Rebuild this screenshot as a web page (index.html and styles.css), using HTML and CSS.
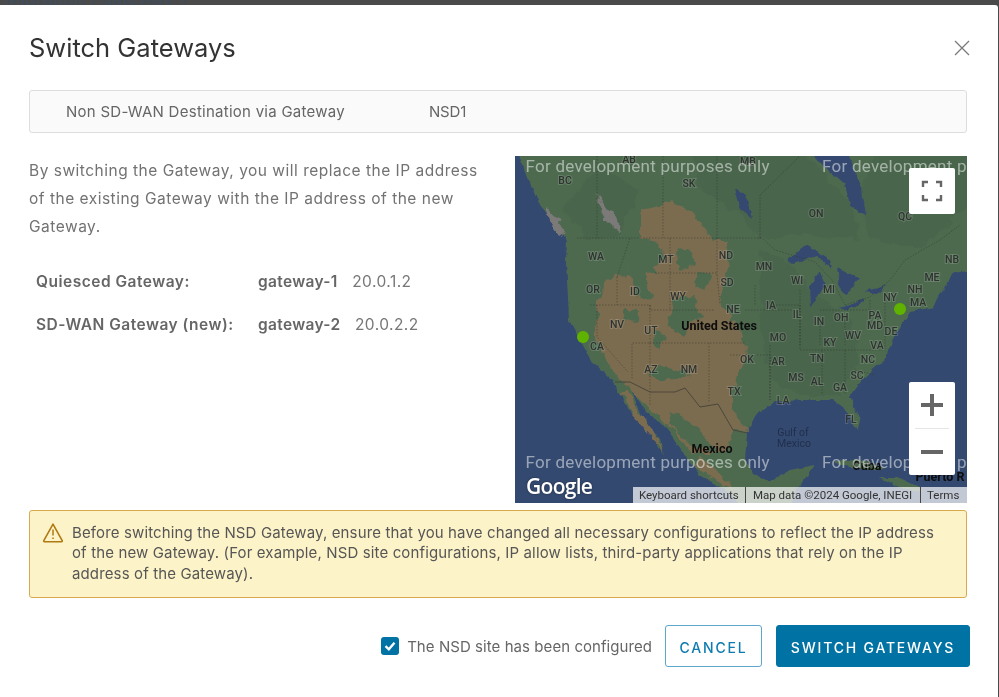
FILE: index.html
```html
<!DOCTYPE html>
<html lang="en">
<head>
<meta charset="utf-8">
<title>Switch Gateways</title>
<link rel="stylesheet" href="styles.css">
</head>
<body>
<div class="backdrop"><span class="crumb">Migration / gateway 1</span></div>
<main class="modal">
  <header class="modal-head">
    <h1 class="title">Switch Gateways</h1>
    <button class="close" aria-label="Close">
      <svg viewBox="0 0 16 16" width="16" height="16"><path d="M1 1 15 15M15 1 1 15" class="close-x"/></svg>
    </button>
  </header>
  <section class="info">
    <span class="info-label">Non SD-WAN Destination via Gateway</span>
    <span class="info-value">NSD1</span>
  </section>
  <section class="columns">
    <div class="left">
      <p class="intro">By switching the Gateway, you will replace the IP address<br>of the existing Gateway with the IP address of the new<br>Gateway.</p>
      <div class="gw-list">
        <div class="gw-row"><b class="gw-label">Quiesced Gateway:</b><b class="gw-name">gateway-1</b><span class="ip">20.0.1.2</span></div>
        <div class="gw-row"><b class="gw-label">SD-WAN Gateway (new):</b><b class="gw-name">gateway-2</b><span class="ip">20.0.2.2</span></div>
      </div>
    </div>
    <div class="map">
      <svg class="map-art" viewBox="515 156 452 347" width="452" height="347">
        <defs>
          <filter id="rough" x="-5%" y="-5%" width="110%" height="110%">
            <feTurbulence type="fractalNoise" baseFrequency=".09" numOctaves="3" seed="4" result="n"/>
            <feDisplacementMap in="SourceGraphic" in2="n" scale="11" xChannelSelector="R" yChannelSelector="G"/>
            <feGaussianBlur stdDeviation=".6"/>
          </filter>
          <filter id="rough-fine" x="-5%" y="-5%" width="110%" height="110%">
            <feTurbulence type="fractalNoise" baseFrequency=".14" numOctaves="2" seed="9" result="n"/>
            <feDisplacementMap in="SourceGraphic" in2="n" scale="5" xChannelSelector="R" yChannelSelector="G"/>
            <feGaussianBlur stdDeviation=".4"/>
          </filter>
        </defs>
        <rect x="515" y="156" width="452" height="347" class="ocean"/>
        <g filter="url(#rough-fine)">
        <path class="land" d="M510,150 519,156 528,180 540,205 556,225 567,240 566,262 568,297 569,320 580,340 593,363 612,381 628,408 650,430 663,455 660,440 640,415 632,390 645,410 668,430 685,455 700,475 725,490 745,510 790,510 798,488 815,465 790,470 770,482 755,475 745,460 747,432 755,415 775,402 800,400 833,400 843,407 858,430 860,420 850,397 862,380 887,357 888,350 897,333 910,312 933,307 945,287 953,273 975,270 975,150Z"/>
        <path class="land" d="M830,461 860,460 885,468 870,470 845,466Z"/>
        <path class="land" d="M880,478 900,478 925,490 905,490Z"/>
        </g>
        <g filter="url(#rough)">
        <path class="land-dark" d="M690,150 800,150 850,200 860,240 800,235 760,238 740,215 700,190Z"/>
        <path class="land-dark" d="M880,150 975,150 975,200 920,250 870,240 860,190Z"/>
        <path class="land-dark" d="M760,250 790,262 810,290 850,320 860,360 840,395 800,395 770,380 760,330Z"/>
        <path class="land-dark" d="M600,165 640,190 620,235 590,238 560,210Z"/>
        <path class="brown" d="M640,210 670,200 693,213 713,240 730,240 727,273 720,300 740,333 747,353 733,387 733,413 747,432 733,430 727,453 693,453 673,430 657,417 640,400 613,373 597,337 597,300 617,277 657,273 640,240Z"/>
        <path class="brown" d="M628,392 650,425 663,452 640,424 620,392Z"/>
        <path class="brown" d="M700,455 720,475 735,490 716,482 695,465Z"/>
        <path class="brown" d="M605,278 625,285 625,300 600,300Z"/>
        <path class="green" d="M640,238 658,244 666,258 652,268 645,282 654,296 640,300 632,280 625,268 628,250Z"/>
        <path class="green" d="M676,250 690,252 694,264 680,270Z"/>
        <path class="green" d="M672,300 695,296 700,318 690,322 682,336 668,325Z"/>
        <path class="green" d="M655,330 665,336 660,350 650,344Z"/>
        <path class="green" d="M660,365 690,372 685,380 650,378Z"/>
        <path class="green" d="M672,410 700,430 715,452 690,445 670,425Z"/>
        <path class="green" d="M625,308 640,312 636,322 622,320Z"/>
        <path class="green" d="M698,270 712,276 706,290 694,286Z"/>
        <path class="grey" d="M545,205 556,218 566,232 560,236 548,220Z"/>
        <path class="grey" d="M597,195 612,212 622,232 606,220Z"/>
        </g>
        <g filter="url(#rough-fine)">
        <path class="lake" d="M808,150 847,150 862,190 866,215 860,212 850,205 845,185 830,172Z"/>
        <path class="lake" d="M735,188 745,195 752,218 740,208Z"/>
        <path class="lake" d="M787,260 807,245 830,260 832,270 817,256 793,264Z"/>
        <path class="lake" d="M810,307 809,287 820,272 825,285 816,300Z"/>
        <path class="lake" d="M836,268 860,278 846,295 840,290Z"/>
        <path class="lake" d="M840,308 865,298 860,305 845,310Z"/>
        <path class="lake" d="M865,292 887,285 877,294Z"/>
        </g>
        <path class="line" d="M577,238H762L775,250 815,262 832,280 845,305 870,297 890,280 905,260 940,240 960,225M597,156V238M663,156V238M717,156V238M760,238V195L800,156M590,305H650V310H670M597,305V337L628,372M617,277V305M617,277 630,238M650,305V343H632V380M655,273H717M670,238V310M670,310H715M717,238V275M717,275 720,305M650,343H745M650,343V405M709,343V403M730,355H770V400M770,345V400M770,305H800V345M745,310H800M755,285V305M800,290V350M800,350H885M820,320V345M845,320V345M820,310H870M885,300V350M870,300V325M845,350V395M822,350V395M855,370 875,375"/>
        <path class="border" d="M615,382H630L650,392H675L685,388 700,407 718,404 733,430 747,433"/>
        <text class="lbl" x="565" y="180">BC</text><text class="lbl" x="689" y="183">SK</text><text class="lbl" x="629" y="159">AB</text><text class="lbl" x="748" y="161">MB</text><text class="lbl" x="816" y="213">ON</text><text class="lbl" x="905" y="216">QC</text>
        <text class="lbl" x="596" y="256">WA</text><text class="lbl" x="666" y="259">MT</text><text class="lbl" x="726" y="255">ND</text><text class="lbl" x="764" y="266">MN</text><text class="lbl" x="952" y="259">NB</text><text class="lbl" x="932" y="277">ME</text><text class="lbl" x="797" y="280">WI</text><text class="lbl" x="829" y="289">MI</text><text class="lbl" x="593" y="289">OR</text><text class="lbl" x="635" y="291">ID</text><text class="lbl" x="678" y="296">WY</text><text class="lbl" x="727" y="282">SD</text><text class="lbl" x="915" y="289">NH</text><text class="lbl" x="890" y="297">NY</text><text class="lbl" x="918" y="302">MA</text><text class="lbl" x="733" y="309">NE</text><text class="lbl" x="771" y="305">IA</text><text class="lbl" x="797" y="314">IL</text><text class="lbl" x="819" y="321">IN</text><text class="lbl" x="841" y="317">OH</text><text class="lbl" x="875" y="315">PA</text><text class="lbl" x="875" y="325">MD</text><text class="lbl" x="891" y="331">DE</text><text class="lbl" x="617" y="324">NV</text><text class="lbl" x="651" y="330">UT</text><text class="lbl" x="597" y="346">CA</text><text class="lbl" x="778" y="337">MO</text><text class="lbl" x="830" y="342">KY</text><text class="lbl" x="853" y="335">WV</text><text class="lbl" x="877" y="345">VA</text><text class="lbl" x="868" y="359">NC</text><text class="lbl" x="747" y="359">OK</text><text class="lbl" x="778" y="361">AR</text><text class="lbl" x="817" y="358">TN</text><text class="lbl" x="651" y="369">AZ</text><text class="lbl" x="689" y="369">NM</text><text class="lbl" x="796" y="377">MS</text><text class="lbl" x="817" y="381">AL</text><text class="lbl" x="840" y="387">GA</text><text class="lbl" x="857" y="375">SC</text><text class="lbl" x="734" y="391">TX</text><text class="lbl" x="783" y="400">LA</text><text class="lbl" x="851" y="419">FL</text>
        <text class="country" x="719" y="325">United States</text><text class="country" x="712" y="448">Mexico</text><text class="country" x="867" y="465">Cuba</text><text class="country" x="940" y="476">Puerto R</text>
        <text class="gulf" x="793" y="432">Gulf of</text><text class="gulf" x="794" y="443">Mexico</text>
        <circle class="dot" cx="583" cy="337" r="6"/><circle class="dot" cx="900" cy="309" r="6"/>
        <text class="dev" x="525.5" y="172">For development purposes only</text><text class="dev" x="822" y="172">For development purposes only</text>
        <text class="dev" x="525.5" y="468">For development purposes only</text><text class="dev" x="822" y="468">For development purposes only</text>
      </svg>
      <button class="ctl ctl-full" aria-label="Fullscreen">
        <svg viewBox="0 0 22 22" width="22" height="22"><path class="ctl-ic-thin" d="M2 7V2H7M15 2H20V7M20 15V20H15M7 20H2V15"/></svg>
      </button>
      <div class="ctl ctl-zoom">
        <button class="zoom-btn" aria-label="Zoom in"><svg viewBox="0 0 22 22" width="22" height="22"><path class="ctl-ic" d="M0 11H22M11 0V22"/></svg></button>
        <span class="zoom-sep"></span>
        <button class="zoom-btn" aria-label="Zoom out"><svg viewBox="0 0 22 22" width="22" height="22"><path class="ctl-ic" d="M0 11H22"/></svg></button>
      </div>
      <span class="logo">Google</span>
      <div class="attrib"><span class="a-key">Keyboard shortcuts</span><span class="a-data">Map data ©2024 Google, INEGI</span><span class="a-terms">Terms</span></div>
    </div>
  </section>
  <section class="alert">
    <svg class="alert-ic" viewBox="0 0 20 20" width="20" height="20"><path class="alert-tri" d="M10 1.2 19.2 17.6a.8.8 0 0 1-.7 1.2H1.5a.8.8 0 0 1-.7-1.2Z"/><path class="alert-mark" d="M10 6.5V12.5M10 14.6V16"/></svg>
    <p class="alert-text">Before switching the NSD Gateway, ensure that you have changed all necessary configurations to reflect the IP address<br>of the new Gateway. (For example, NSD site configurations, IP allow lists, third-party applications that rely on the IP<br>address of the Gateway).</p>
  </section>
  <footer class="foot">
    <label class="check"><span class="box"><svg viewBox="0 0 18 18" width="18" height="18"><path d="M4.5 9.2 7.8 12.3 13.5 5.8" class="tick"/></svg></span>The NSD site has been configured</label>
    <button class="btn btn-out">CANCEL</button>
    <button class="btn btn-solid">SWITCH GATEWAYS</button>
  </footer>
</main>
</body>
</html>
```
FILE: styles.css
```css
* { box-sizing: border-box; }
html, body { margin: 0; height: 100%; }
body {
  background: #4a4a4a;
  font-family: "Inter", "Liberation Sans", sans-serif;
  color: #666;
  overflow: hidden;
  display: flex;
  flex-direction: column;
}
.backdrop { height: 5px; overflow: hidden; flex: none; padding-left: 5px; }
.crumb { display: block; margin-top: -10px; font-size: 18px; line-height: 18px; color: #3f4d5c; }
.modal {
  flex: 1;
  width: 998px;
  background: #fff;
  border-top-right-radius: 3px;
  padding: 0 31px 0 29px;
  display: flex;
  flex-direction: column;
  filter: blur(0.35px);
}
.modal-head { height: 85px; display: flex; align-items: center; justify-content: space-between; }
.title { margin: 0; font-size: 25.5px; font-weight: 400; color: #333; line-height: 86px; }
.close { border: 0; background: none; padding: 0; margin-right: -3px; height: 16px; }
.close-x { stroke: #7a7a7a; stroke-width: 1.3; fill: none; }
.info {
  height: 43px;
  border: 1px solid #ddd;
  border-radius: 3px;
  background: #fafafa;
  display: flex;
  align-items: center;
  padding: 0 0 1px 36px;
  font-size: 15px;
  letter-spacing: .26px;
  color: #666;
}
.info-label { width: 363px; }
.info-value { letter-spacing: -.2px; }
.columns { margin-top: 23px; display: flex; justify-content: space-between; height: 347px; }
.left { width: 470px; }
.intro { margin: 1px 0 0; font-size: 15.5px; letter-spacing: .5px; line-height: 28px; color: #727272; }
.gw-list { margin-top: 19px; padding-left: 7px; font-size: 15.5px; color: #666; }
.gw-row { display: flex; height: 43px; align-items: center; }
.gw-row b { font-weight: 600; }
.gw-label { width: 222px; letter-spacing: .5px; }
.gw-name { letter-spacing: .33px; }
.ip { margin-left: 14.5px; color: #777; letter-spacing: .45px; }
.map { position: relative; width: 452px; height: 347px; overflow: hidden; }
.map-art { display: block; }
.ocean { fill: #34496f; }
.land { fill: #4e6b50; }
.land-dark { fill: #4a654c; }
.brown { fill: #7b6c50; }
.green { fill: #4e6b50; }
.grey { fill: #7c7a78; }
.lake { fill: #34496f; }
.line { fill: none; stroke: #2b3029; stroke-width: .8; stroke-dasharray: 1.5 1.5; opacity: .55; }
.border { fill: none; stroke: #4b463c; stroke-width: 1; }
.lbl { font: 500 10.5px "Roboto", sans-serif; fill: #2f3330; text-anchor: middle; dominant-baseline: central; paint-order: stroke; stroke: rgba(255,255,255,.14); stroke-width: 2px; }
.country { font: 700 12.5px "Roboto", sans-serif; fill: #0d0d0d; text-anchor: middle; dominant-baseline: central; }
.gulf { font: 400 10.5px "Roboto", sans-serif; fill: #1f2f4d; text-anchor: middle; dominant-baseline: central; }
.dev { font: 400 17px "Roboto", sans-serif; fill: rgba(255,255,255,.5); letter-spacing: .25px; }
.dot { fill: #5fb300; }
.ctl { position: absolute; left: 394px; width: 46px; background: #fff; border: 0; border-radius: 2px; padding: 0; }
.ctl-full { top: 12px; height: 46px; display: flex; align-items: center; justify-content: center; }
.ctl-zoom { top: 226px; height: 93px; display: flex; flex-direction: column; align-items: center; }
.zoom-btn { border: 0; background: none; padding: 0; height: 46px; width: 46px; display: flex; align-items: center; justify-content: center; }
.zoom-sep { width: 34px; height: 1px; background: #e6e6e6; flex: none; }
.ctl-ic { stroke: #666; stroke-width: 4; fill: none; }
.ctl-ic-thin { stroke: #666; stroke-width: 2.4; fill: none; }
.logo { position: absolute; left: 11px; top: 316px; font: 600 21px/28px "Open Sans", sans-serif; letter-spacing: -.7px; color: #fff; text-shadow: 0 0 2px #1b2a44; }
.attrib { position: absolute; right: 0; bottom: 0; height: 16px; width: 334px; background: rgba(255,255,255,.7); display: flex; font: 400 11.5px/16px "Roboto", sans-serif; color: #333; }
.attrib span { display: block; height: 16px; }
.a-key { width: 113px; padding-left: 6px; border-right: 1px solid #444; }
.a-data { width: 175px; padding-left: 7px; border-right: 1px solid #444; }
.a-terms { padding-left: 6px; }
.alert {
  margin-top: 7px;
  height: 88px;
  border: 1px solid #d9aa4d;
  border-radius: 3px;
  background: #fdf3c8;
  display: flex;
  padding: 11.5px 0 0 13px;
}
.alert-ic { flex: none; }
.alert-tri { fill: none; stroke: #b07a12; stroke-width: 1.6; stroke-linejoin: round; }
.alert-mark { stroke: #b07a12; stroke-width: 1.5; fill: none; }
.alert-text { margin: 0 0 0 9px; font-size: 15px; letter-spacing: .13px; line-height: 20.6px; color: #565656; white-space: nowrap; }
.foot { margin: 27px -3px 0 0; height: 42px; display: flex; justify-content: flex-end; align-items: center; }
.check { display: flex; align-items: center; font-size: 15px; letter-spacing: .06px; color: #666; margin-right: 13px; }
.box { width: 18px; height: 18px; background: #0072a3; border-radius: 3px; margin-right: 8px; display: block; }
.box svg { display: block; }
.tick { fill: none; stroke: #fff; stroke-width: 2.4; }
.btn { height: 42px; border-radius: 3px; font-family: inherit; font-size: 14px; font-weight: 500; letter-spacing: 1.8px; padding: 2px 0 0; }
.btn-out { width: 97px; background: #fff; border: 1px solid #5da6cc; color: #0f7bb0; margin-right: 14px; }
.btn-solid { width: 194px; background: #0072a3; border: 1px solid #0072a3; color: #fff; }
```
